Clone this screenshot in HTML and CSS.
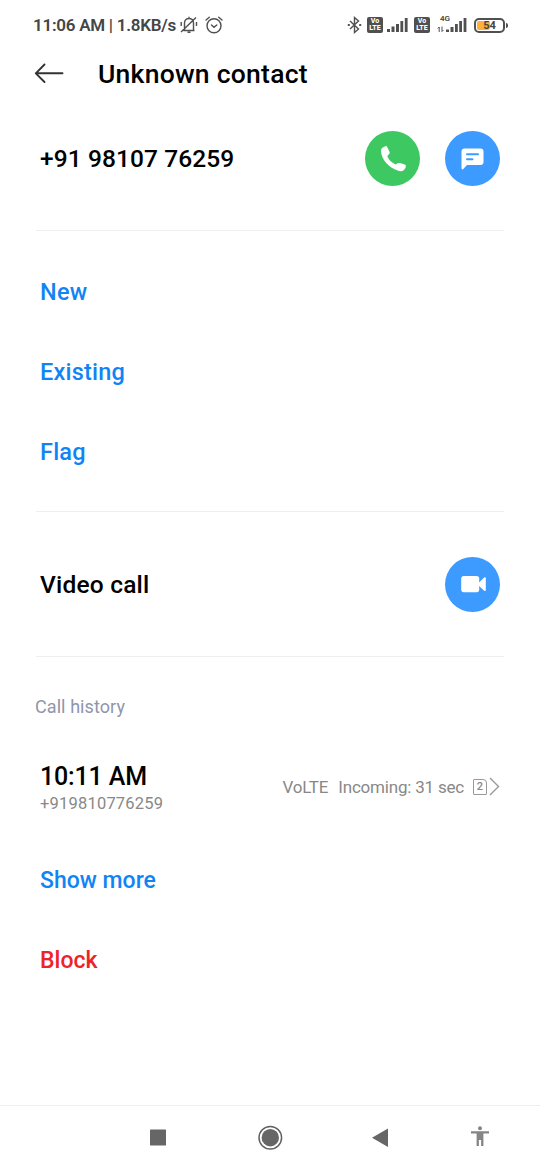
FILE: index.html
```html
<!DOCTYPE html>
<html lang="en">
<head>
<meta charset="utf-8">
<title>Unknown contact</title>
<link rel="stylesheet" href="styles.css">
</head>
<body>
<div class="phone">
  <div class="status">
    <span class="clock">11:06 AM | 1.8KB/s</span>
    <svg class="mute" width="18" height="18" viewBox="0 0 18 18" fill="none" stroke="#505050" stroke-width="1.4"><path d="M3.5 14.5h11M4.5 14V7c0-6 9-6 9 0v7M9 2V.8M7.5 16.3h3M1 16 16 1.5M1.2 6v4M16.500 6v4"/></svg>
    <svg class="alarm" width="18" height="18" viewBox="0 0 18 18" fill="none" stroke="#505050" stroke-width="1.4" stroke-linecap="round"><circle cx="9" cy="9.8" r="7"/><path d="M6.5 9 9 11.3 11.8 9M1 4 4.3 1.2M17 4l-3.3-2.8"/></svg>
    <span class="spacer"></span>
    <svg class="bluetooth" width="15" height="18" viewBox="0 0 15 18" fill="none" stroke="#505050" stroke-width="1.4"><path d="M3 5l8.500 8L7.500 16.500v-15l4 3.500L3 13"/><path d="M.8 9h2M12.200 9h2" stroke-width="2"/></svg>
    <span class="volte"><span>Vo</span><span>LTE</span></span>
    <svg class="signal" width="21" height="16" viewBox="0 0 21 16" fill="#505050"><path d="M0 12h3v3H0zM4.500 9.500h3V15h-3zM9 7h3v8H9zM13.400 4h2.800v11h-2.800zM17.800 1h2.800v14h-2.800z"/></svg>
    <span class="volte second"><span>Vo</span><span>LTE</span></span>
    <span class="cell">
      <span class="net">4G</span>
      <svg width="30" height="16" viewBox="0 0 30 16" fill="#505050"><path d="M9 12.500h3V15H9zM13.500 10h3v5h-3zM18 7h2.800v8H18zM22.200 4H25v11h-2.800zM26.600 1h2.800v14h-2.800z"/><path d="M2.200 15v-5M.8 11.500 2.200 10M5 9.500v5M5 14.500 6.400 13" fill="none" stroke="#505050"/></svg>
    </span>
    <span class="battery"><span class="level"></span><b>54</b></span><i class="nub"></i>
  </div>

  <header class="header">
    <svg width="30" height="22" viewBox="0 0 30 22" fill="none" stroke="#333" stroke-width="1.9" stroke-linecap="round" stroke-linejoin="round"><path d="M10.500 1.500 1.800 10.300l8.700 8.700M1.800 10.300H28.500"/></svg>
    <h1>Unknown contact</h1>
  </header>

  <section class="row number">
    <span class="title phone-number">+91 98107 76259</span>
    <span class="round green"><svg width="55" height="55" viewBox="0 0 55 55"><path d="M17.400 16.800 20.300 15.200Q21.600 14.800 22.300 16.300L24.600 21Q25 22.300 24 23.200L22.300 25C23.800 28.800 26.300 31.400 30.500 33.500L32.700 32.200Q33.800 31.700 35 32L39.800 33.600Q41.300 34.500 40.800 35.900C39.500 39.600 36.900 40.900 33.200 39.700C23.500 36.600 16.200 28 16 20Q16 17.800 17.400 16.800Z" fill="#fff"/></svg></span>
    <span class="round blue"><svg width="55" height="55" viewBox="0 0 55 55"><path d="M19.500 17.500h16q3 0 3 3v10.500q0 3-3 3H22L18 38.200q-1.500.7-1.500-1.200V20.500q0-3 3-3Z" fill="#fff"/><path d="M22 23.200h11M22 28.200h5.500" stroke="#3d9aff" stroke-width="2" stroke-linecap="round"/></svg></span>
  </section>

  <section class="actions">
    <a>New</a>
    <a>Existing</a>
    <a>Flag</a>
  </section>

  <section class="row video">
    <span class="title">Video call</span>
    <span class="round blue"><svg width="55" height="55" viewBox="0 0 55 55" fill="#fff"><rect x="16.200" y="19" width="18" height="16.200" rx="2.600"/><path d="M33.500 25.900 39.200 20.500Q40.800 19.700 40.800 21.200V33Q40.800 34.500 39.200 33.700L33.500 28.400Z"/></svg></span>
  </section>

  <section class="history">
    <h2>Call history</h2>
    <div class="entry">
      <div class="when">
        <div class="time">10:11 AM</div>
        <div class="caller">+919810776259</div>
      </div>
      <div class="detail">
        <span>VoLTE</span><span class="incoming">Incoming: 31 sec</span>
        <span class="sim">2</span>
        <svg width="11" height="20" viewBox="0 0 11 20" fill="none" stroke="#999" stroke-width="1.400"><path d="M1 1 9.500 9.500 1 18"/></svg>
      </div>
    </div>
    <a class="more">Show more</a>
    <a class="block">Block</a>
  </section>

  <nav class="navbar">
    <svg width="540" height="64" viewBox="0 0 540 64" fill="#666"><rect x="150" y="23.500" width="16" height="16" rx=".6"/><circle cx="270.300" cy="31.700" r="8.700"/><circle cx="270.300" cy="31.700" r="11.300" fill="none" stroke="#606060" stroke-width="1.500"/><path d="M372 31.700 388 22.500V41Z"/><g fill="#858585"><circle cx="480" cy="22.300" r="2"/><path d="M471 25.300h18v2.200h-5.600V40h-2.300v-6h-2.200v6h-2.300V27.500H471z"/></g></svg>
  </nav>
</div>
</body>
</html>
```

FILE: styles.css
```css
* { box-sizing: border-box; }
body {
  margin: 0;
  background: #fff;
  color: #000;
  font-family: Roboto, "Liberation Sans", sans-serif;
}
.phone {
  width: 540px;
  height: 1170px;
  display: flex;
  flex-direction: column;
  overflow: hidden;
}
.status {
  height: 50px;
  padding: 0 32px 0 33px;
  display: flex;
  align-items: center;
  color: #454545;
  flex: none;
}
.clock { font-size: 17px; letter-spacing: -0.26px; font-weight: 600; white-space: nowrap; width: 143px; }
.mute { margin-left: 4px; }
.alarm { margin-left: 7px; }
.spacer { flex: 1; }
.volte {
  width: 16px;
  height: 16px;
  margin-left: 5px;
  border-radius: 2px;
  background: #505050;
  color: #fff;
  font-size: 7px;
  font-weight: 800;
  line-height: 7px;
  display: flex;
  flex-direction: column;
  align-items: center;
  justify-content: center;
}
.signal { margin-left: 4px; }
.volte.second { margin-left: 6px; }
.cell { position: relative; display: flex; margin-left: 7px; }
.net { position: absolute; left: 3px; top: -2px; font-size: 8px; line-height: 8px; font-weight: 600; }
.battery {
  position: relative;
  width: 31px;
  height: 15px;
  margin-left: 7px;
  border: 2px solid #505050;
  border-radius: 5px;
  display: flex;
  align-items: center;
  justify-content: center;
}
.level { position: absolute; left: 1px; top: 1px; width: 13px; height: 9px; border-radius: 2px; background: #ffb038; }
.battery b { position: relative; font-size: 11px; line-height: 11px; }
.nub { width: 2px; height: 5px; margin-left: 1px; border-radius: 0 2px 2px 0; background: #505050; }

.header { height: 48px; flex: none; padding-left: 34px; display: flex; align-items: center; }
.header h1 { margin: 0 0 0 34px; font-size: 26.5px; font-weight: 500; line-height: 32px; letter-spacing: 0.25px; }

.row {
  flex: none;
  margin: 0 36px;
  padding: 0 4px;
  display: flex;
  align-items: center;
  border-bottom: 1px solid #efefef;
}
.title { flex: 1; padding-top: 1px; font-size: 24.5px; font-weight: 500; line-height: 30px; letter-spacing: 0.1px; }
.number { height: 133px; padding-bottom: 12px; }
.round { width: 55px; height: 55px; border-radius: 50%; margin-left: 25px; }
.round svg { display: block; }
.green { background: #3dc862; }
.blue { background: #3d9aff; }

.actions {
  flex: none;
  height: 281px;
  margin: 0 36px;
  padding: 21px 4px 0;
  border-bottom: 1px solid #efefef;
}
a { display: block; color: #1184f5; font-size: 23px; font-weight: 500; line-height: 80px; }
.actions a { font-size: 23.5px; letter-spacing: 0.22px; }
.video { height: 145px; }
.video .title { letter-spacing: 0.2px; }

.history { flex: 1; padding: 0 40px; }
.history h2 { margin: 38px 0 0 -5px; font-size: 18px; font-weight: 400; line-height: 24px; letter-spacing: 0.08px; color: #8f96ab; }
.entry { height: 122px; display: flex; align-items: center; }
.when { padding-top: 17px; }
.time { font-size: 25px; font-weight: 500; line-height: 30px; letter-spacing: -0.15px; }
.caller { font-size: 16.5px; line-height: 24px; letter-spacing: 0.2px; color: #888; }
.detail { margin-left: auto; padding-top: 13px; display: flex; align-items: center; font-size: 17px; line-height: 22px; letter-spacing: -0.2px; color: #888; }
.incoming { margin-left: 10px; }
.sim {
  width: 14px;
  height: 16px;
  margin: 0 2px 0 9px;
  border: 1px solid #999;
  border-radius: 1px 4px 1px 1px;
  font-size: 11px;
  font-weight: 500;
  line-height: 14px;
  letter-spacing: 0;
  text-align: center;
}
.block { color: #ed2328; }
.navbar { flex: none; height: 65px; border-top: 1px solid #eee; }
.navbar svg { display: block; }
```
